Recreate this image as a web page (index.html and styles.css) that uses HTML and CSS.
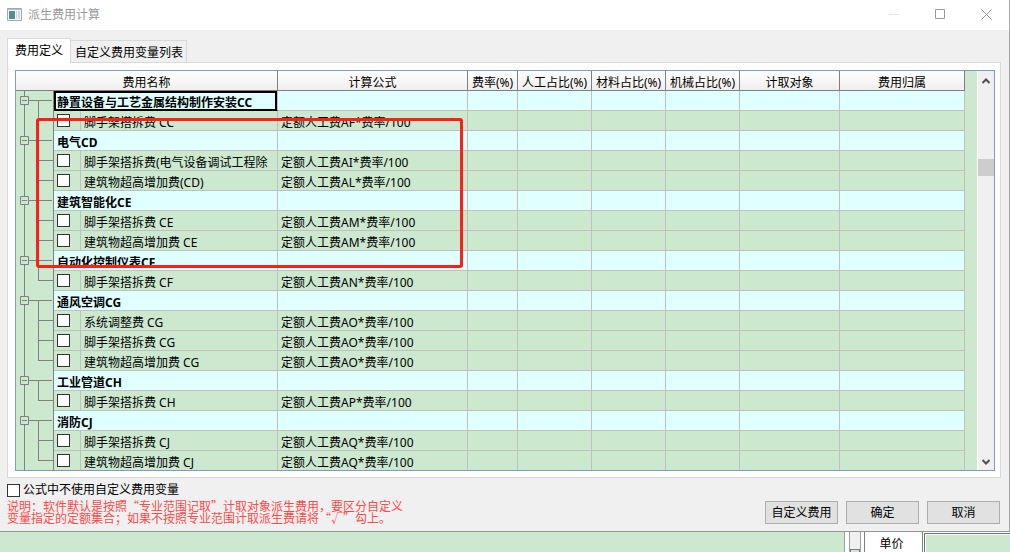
FILE: index.html
```html
<!DOCTYPE html>
<html lang="zh-CN">
<head>
	<meta charset="utf-8">
	<title>派生费用计算</title>
	<link rel="stylesheet" href="styles.css">
</head>
<body>

<!-- tree gutter pieces, one per row type -->
<svg class="defs" width="0" height="0">
	<symbol id="node" viewBox="0 0 37 20">
		<path d="M8.5 0v5M8.5 14v6M13 9.5h23M22.5 10v10"/>
		<path d="M4.5 5.5h8v8h-8zM6 9.5h5"/>
	</symbol>
	<symbol id="mid" viewBox="0 0 37 20">
		<path d="M8.5 0v20M22.5 0v20M22 9.5h15"/>
	</symbol>
	<symbol id="last" viewBox="0 0 37 20">
		<path d="M8.5 0v20M22.5 0v10M22 9.5h15"/>
	</symbol>
</svg>

<div class="dialog">
	<header class="titlebar">
		<svg class="appicon" width="15" height="13" viewBox="0 0 15 13">
			<path fill="#f4f6f8" stroke="#a3a9ae" d="M.5.5h14v12H.5z"/>
			<path fill="#b4bcc4" d="M1 1h13v1H1z"/>
			<path fill="#5b86a5" d="M2 3h6v8H2z"/>
			<path fill="#3f9c7c" d="M3 5h4v5H3z"/>
			<path fill="#d3d8dc" d="M9 3h1v8H9zM11 3h2v8h-2z"/>
		</svg>
		<h1>派生费用计算</h1>
		<button class="win" aria-label="最小化"><svg width="11" height="11"><path stroke="#e3e3e3" d="M0 5.5h10"/></svg></button>
		<button class="win" aria-label="最大化"><svg width="11" height="11"><path stroke="#999" d="M.5.5h9v9h-9z"/></svg></button>
		<button class="win" aria-label="关闭"><svg width="11" height="11"><path stroke="#999" d="M.5.5l10 10M10.500.5l-10 10"/></svg></button>
	</header>

	<div class="tabs">
		<button class="tab active">费用定义</button>
		<button class="tab">自定义费用变量列表</button>
	</div>

	<main class="panel">
		<div class="grid">
			<div class="rows">
				<table>
					<colgroup>
						<col class="c-tree"><col class="c-check"><col class="c-name"><col class="c-formula"><col class="c-rate">
						<col class="c-ratio"><col class="c-ratio"><col class="c-ratio"><col class="c-target"><col class="c-owner">
					</colgroup>
					<thead>
						<tr><th colspan="3">费用名称</th><th>计算公式</th><th>费率(%)</th><th>人工占比(%)</th><th>材料占比(%)</th><th>机械占比(%)</th><th>计取对象</th><th>费用归属</th></tr>
					</thead>
					<tbody>
						<tr class="group"><td class="tree"><svg><use href="#node"/></svg></td><td colspan="2" class="current">静置设备与工艺金属结构制作安装CC</td><td></td><td></td><td></td><td></td><td></td><td></td><td></td></tr>
						<tr><td class="tree"><svg><use href="#last"/></svg></td><td class="check"><input type="checkbox" id="r1"></td><td><label for="r1">脚手架搭拆费 CC</label></td><td>定额人工费AF*费率/100</td><td></td><td></td><td></td><td></td><td></td><td></td></tr>
						<tr class="group"><td class="tree"><svg><use href="#node"/></svg></td><td colspan="2">电气CD</td><td></td><td></td><td></td><td></td><td></td><td></td><td></td></tr>
						<tr><td class="tree"><svg><use href="#mid"/></svg></td><td class="check"><input type="checkbox" id="r2"></td><td><label for="r2">脚手架搭拆费(电气设备调试工程除</label></td><td>定额人工费AI*费率/100</td><td></td><td></td><td></td><td></td><td></td><td></td></tr>
						<tr><td class="tree"><svg><use href="#last"/></svg></td><td class="check"><input type="checkbox" id="r3"></td><td><label for="r3">建筑物超高增加费(CD)</label></td><td>定额人工费AL*费率/100</td><td></td><td></td><td></td><td></td><td></td><td></td></tr>
						<tr class="group"><td class="tree"><svg><use href="#node"/></svg></td><td colspan="2">建筑智能化CE</td><td></td><td></td><td></td><td></td><td></td><td></td><td></td></tr>
						<tr><td class="tree"><svg><use href="#mid"/></svg></td><td class="check"><input type="checkbox" id="r4"></td><td><label for="r4">脚手架搭拆费 CE</label></td><td>定额人工费AM*费率/100</td><td></td><td></td><td></td><td></td><td></td><td></td></tr>
						<tr><td class="tree"><svg><use href="#last"/></svg></td><td class="check"><input type="checkbox" id="r5"></td><td><label for="r5">建筑物超高增加费 CE</label></td><td>定额人工费AM*费率/100</td><td></td><td></td><td></td><td></td><td></td><td></td></tr>
						<tr class="group"><td class="tree"><svg><use href="#node"/></svg></td><td colspan="2">自动化控制仪表CF</td><td></td><td></td><td></td><td></td><td></td><td></td><td></td></tr>
						<tr><td class="tree"><svg><use href="#last"/></svg></td><td class="check"><input type="checkbox" id="r6"></td><td><label for="r6">脚手架搭拆费 CF</label></td><td>定额人工费AN*费率/100</td><td></td><td></td><td></td><td></td><td></td><td></td></tr>
						<tr class="group"><td class="tree"><svg><use href="#node"/></svg></td><td colspan="2">通风空调CG</td><td></td><td></td><td></td><td></td><td></td><td></td><td></td></tr>
						<tr><td class="tree"><svg><use href="#mid"/></svg></td><td class="check"><input type="checkbox" id="r7"></td><td><label for="r7">系统调整费 CG</label></td><td>定额人工费AO*费率/100</td><td></td><td></td><td></td><td></td><td></td><td></td></tr>
						<tr><td class="tree"><svg><use href="#mid"/></svg></td><td class="check"><input type="checkbox" id="r8"></td><td><label for="r8">脚手架搭拆费 CG</label></td><td>定额人工费AO*费率/100</td><td></td><td></td><td></td><td></td><td></td><td></td></tr>
						<tr><td class="tree"><svg><use href="#last"/></svg></td><td class="check"><input type="checkbox" id="r9"></td><td><label for="r9">建筑物超高增加费 CG</label></td><td>定额人工费AO*费率/100</td><td></td><td></td><td></td><td></td><td></td><td></td></tr>
						<tr class="group"><td class="tree"><svg><use href="#node"/></svg></td><td colspan="2">工业管道CH</td><td></td><td></td><td></td><td></td><td></td><td></td><td></td></tr>
						<tr><td class="tree"><svg><use href="#last"/></svg></td><td class="check"><input type="checkbox" id="r10"></td><td><label for="r10">脚手架搭拆费 CH</label></td><td>定额人工费AP*费率/100</td><td></td><td></td><td></td><td></td><td></td><td></td></tr>
						<tr class="group"><td class="tree"><svg><use href="#node"/></svg></td><td colspan="2">消防CJ</td><td></td><td></td><td></td><td></td><td></td><td></td><td></td></tr>
						<tr><td class="tree"><svg><use href="#mid"/></svg></td><td class="check"><input type="checkbox" id="r11"></td><td><label for="r11">脚手架搭拆费 CJ</label></td><td>定额人工费AQ*费率/100</td><td></td><td></td><td></td><td></td><td></td><td></td></tr>
						<tr><td class="tree"><svg><use href="#last"/></svg></td><td class="check"><input type="checkbox" id="r12"></td><td><label for="r12">建筑物超高增加费 CJ</label></td><td>定额人工费AQ*费率/100</td><td></td><td></td><td></td><td></td><td></td><td></td></tr>
					</tbody>
				</table>
			</div>
			<div class="scroll">
				<button aria-label="向上滚动"><svg width="8" height="6"><path d="M.5 5L4 1.500 7.500 5"/></svg></button>
				<div class="thumb"></div>
				<button aria-label="向下滚动"><svg width="8" height="6"><path d="M.5 1L4 4.500 7.500 1"/></svg></button>
			</div>
			<div class="marker"></div>
		</div>
	</main>

	<footer class="bottom">
		<div class="notes">
			<label class="option"><input type="checkbox">公式中不使用自定义费用变量</label>
			<p class="hint">说明：软件默认是按照“专业范围记取”计取对象派生费用，要区分自定义<br>变量指定的定额集合；如果不按照专业范围计取派生费请将“√”勾上。</p>
		</div>
		<div class="actions">
			<button>自定义费用</button>
			<button>确定</button>
			<button>取消</button>
		</div>
	</footer>
</div>

<!-- part of the main window below the dialog -->
<div class="behind">
	<div class="sheet"></div>
	<div class="track"><div class="track-thumb"></div></div>
	<div class="price">单价</div>
	<div class="sheet-next"></div>
</div>

</body>
</html>
```
FILE: styles.css
```css
*{
	box-sizing: border-box;
}
body{
	margin: 0;
	height: 100vh;
	display: flex;
	flex-direction: column;
	overflow: hidden;
	font: 12px/16px "Noto Sans", "Noto Sans CJK SC", sans-serif;
	color: #000;
}
button{
	font: inherit;
	color: inherit;
	padding: 0;
	border: 0;
	background: none;
}
input[type=checkbox]{
	appearance: none;
	flex: none;
	width: 13px;
	height: 13px;
	margin: 0;
	border: 1px solid #333;
	background: #fff;
}
input[type=checkbox]:checked{
	background: #333;
	box-shadow: inset 0 0 0 2px #fff;
}
.defs{
	position: absolute;
}
symbol path{
	fill: none;
	stroke: #808080;
}

/* dialog */
.dialog{
	flex: 1;
	min-height: 0;
	display: flex;
	flex-direction: column;
	background: #f0f0f0;
	border-right: 1px solid #a8a8a8;
	border-bottom: 1px solid #8c998e;
}
.titlebar{
	display: flex;
	align-items: center;
	height: 30px;
	padding-left: 7px;
	padding-bottom: 2px;
	background: #fff;
}
.titlebar h1{
	flex: 1;
	margin: 0 0 0 6px;
	padding-top: 2px;
	font-size: 12px;
	font-weight: normal;
	color: #999;
}
.win{
	width: 46px;
	height: 28px;
	display: flex;
	align-items: center;
	justify-content: center;
}
.win svg{
	fill: none;
}

/* tabs */
.tabs{
	display: flex;
	align-items: flex-end;
	padding: 8px 7px 0;
}
.tab{
	height: 22px;
	padding: 2px 3px 0 4px;
	border: 1px solid #d9d9d9;
	border-left: 0;
	border-bottom: 0;
}
.tab.active{
	height: 25px;
	margin-bottom: -1px;
	padding: 0 7px;
	border-left: 1px solid #d9d9d9;
	background: #fff;
	z-index: 1;
}
.panel{
	flex: 1;
	min-height: 0;
	display: flex;
	margin: 0 8px 0 7px;
	padding: 7px 5px 6px 7px;
	border: 1px solid #d9d9d9;
	background: #fff;
}

/* grid */
.grid{
	position: relative;
	flex: 1;
	display: flex;
	overflow: hidden;
	border: 1px solid #7f9db9;
	background: #cce8cf;
}
.rows{
	flex: 1;
	min-width: 0;
	overflow: hidden;
}
table{
	width: 949px;
	table-layout: fixed;
	border-collapse: separate;
	border-spacing: 0;
}
.c-tree{ width: 38px; }
.c-check{ width: 27px; }
.c-name{ width: 197px; }
.c-formula{ width: 190px; }
.c-rate{ width: 50px; }
.c-ratio{ width: 74px; }
.c-target{ width: 100px; }
.c-owner{ width: 125px; }
th, td{
	height: 20px;
	padding: 5px 0 0 3px;
	border-right: 1px solid #c0c0c0;
	border-bottom: 1px solid #c0c0c0;
	line-height: 14px;
	text-align: left;
	vertical-align: top;
	white-space: nowrap;
}
th{
	padding-left: 0;
	font-weight: normal;
	text-align: center;
	background: linear-gradient(#fff, #efefef);
	border-color: #808080;
}
.group td{
	background: #e0ffff;
	font-weight: bold;
}
.group td.tree,
td.tree{
	padding: 0;
	border-right-color: #808080;
	border-bottom: 0;
	background: #cce8cf;
}
.tree svg{
	display: block;
	width: 37px;
	height: 20px;
}
td.check{
	padding-top: 3px;
}
.check input{
	display: block;
}
td.current{
	border-bottom-color: #000;
	box-shadow: inset 2px 2px #000, inset -2px -1px #000;
}
.scroll{
	width: 17px;
	display: flex;
	flex-direction: column;
	border-left: 1px solid #fff;
	background: #f0f0f0;
}
.scroll button{
	height: 18px;
}
.scroll path{
	fill: none;
	stroke: #505050;
	stroke-width: 2;
}
.thumb{
	height: 17px;
	margin: 70px 0 auto;
	background: #cdcdcd;
}
/* red frame drawn over the rows */
.marker{
	position: absolute;
	left: 20px;
	top: 47px;
	width: 427px;
	height: 150px;
	border: 3px solid #ff1f14;
	border-radius: 3px;
	pointer-events: none;
}

/* below the panel */
.bottom{
	display: flex;
	justify-content: space-between;
	padding: 4px 9px 7px 7px;
}
.option{
	display: flex;
	align-items: center;
	gap: 3px;
}
.hint{
	margin: 2px 0 0;
	font: 12px/12px "Noto Sans CJK SC", sans-serif;
	color: #ff4a4a;
}
.actions{
	display: flex;
	align-items: flex-end;
	gap: 8px;
}
.actions button{
	width: 73px;
	height: 23px;
	border: 1px solid #adadad;
	background: #e1e1e1;
}

/* main window strip */
.behind{
	display: flex;
	height: 20px;
	background: #fff;
}
.sheet{
	flex: 1;
	background: #cce8cf;
	border-right: 1px solid #a0a0a0;
}
.track{
	width: 12px;
	margin: 0 3px 0 4px;
	padding-top: 17px;
	border: 1px solid #a0a0a0;
	border-width: 0 1px;
	background: #f0f0f0;
}
.track-thumb{
	height: 3px;
	border: 1px solid #808080;
	border-bottom: 0;
	background: #cce8cf;
}
.price{
	width: 59px;
	padding-top: 4px;
	padding-right: 4px;
	border: 1px solid #808080;
	border-width: 0 1px;
	text-align: center;
}
.sheet-next{
	width: 86px;
	margin: 1px 0 0 1px;
	border: 1px solid #707070;
	border-width: 1px 0 0 1px;
	box-shadow: inset 1px 1px #fff;
	background: #cce8cf;
}
```
